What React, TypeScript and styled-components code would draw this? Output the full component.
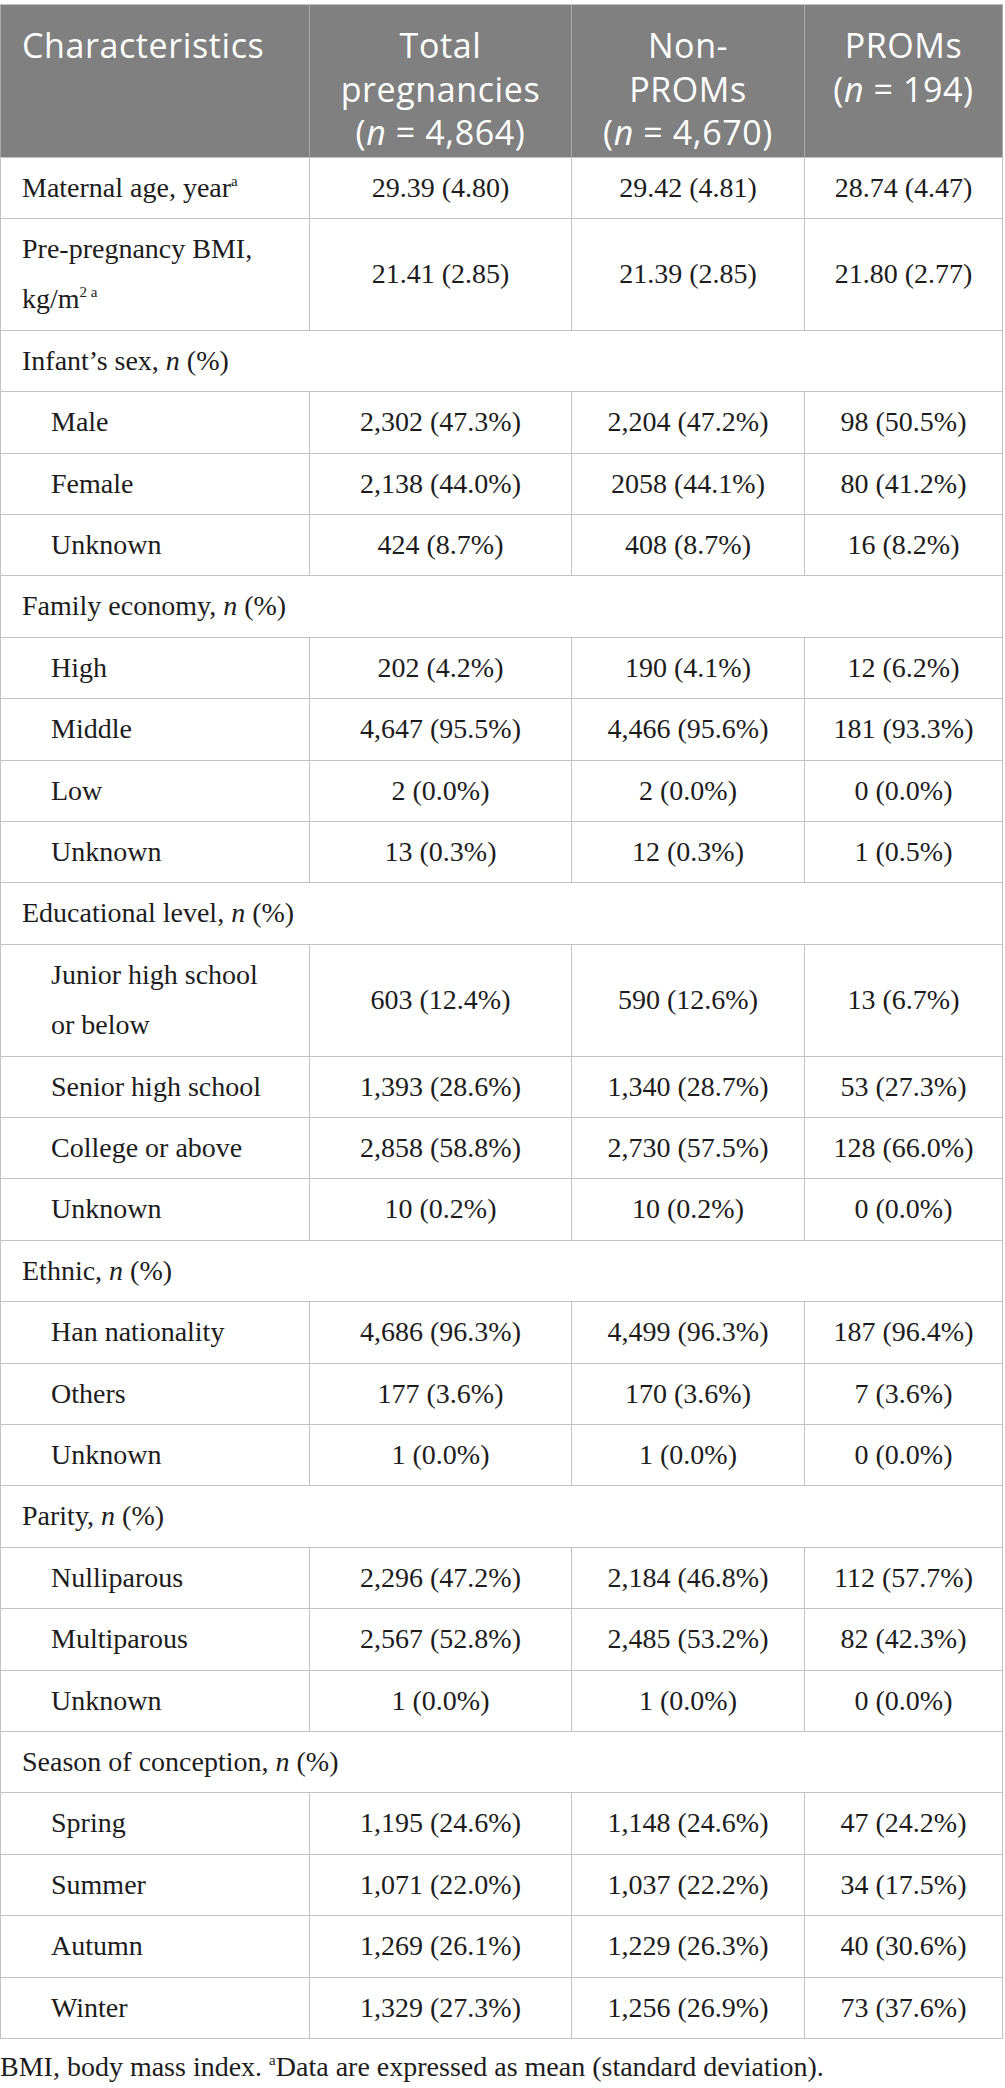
import React from "react";
import styled, { createGlobalStyle } from "styled-components";

const SERIF = `"Liberation Serif", Tinos, "Times New Roman", Times, serif`;

const GlobalStyle = createGlobalStyle`
  html, body {
    margin: 0;
    padding: 0;
    background: #ffffff;
  }
  body {
    font-family: ${SERIF};
    color: #1c1c1c;
  }
`;

const Page = styled.div`
  width: 1005px;
  padding-top: 4px;
`;

const Table = styled.table`
  width: 1002px;
  border-collapse: collapse;
  table-layout: fixed;
  border: 1px solid #c2c2c2;
  font-family: ${SERIF};
  font-size: 28px;
  color: #1c1c1c;
`;

const Col = styled.col<{ $w: number }>`
  width: ${(p) => p.$w}px;
`;

const HeadRow = styled.tr`
  background: #7f807f;
`;

const HeadCell = styled.th<{ $align?: "left" | "center" }>`
  font-family: "Open Sans", "Noto Sans", sans-serif;
  font-weight: 400;
  font-size: 34px;
  line-height: 43.5px;
  letter-spacing: 0.6px;
  color: #ffffff;
  text-align: ${(p) => p.$align ?? "center"};
  vertical-align: top;
  padding: 19px 10px 2px 21px;
  border: 1px solid #a9a9a9;
  border-top-color: #c2c2c2;
  border-bottom-color: #c2c2c2;
  &:not(:first-child) {
    padding-left: 6px;
    padding-right: 6px;
  }
`;

const Line = styled.span`
  display: block;
  white-space: nowrap;
`;

const Row = styled.tr``;

const Cell = styled.td<{ $indent?: boolean }>`
  font-family: ${SERIF};
  font-size: 28px;
  line-height: 50.4px;
  color: #1c1c1c;
  padding: 5px 6px 5px ${(p) => (p.$indent ? 50 : 21)}px;
  text-align: left;
  vertical-align: middle;
  border: 1px solid #c2c2c2;
`;

const ValueCell = styled(Cell)`
  text-align: center;
  padding-left: 4px;
  padding-right: 4px;
  white-space: nowrap;
`;

const Sup = styled.sup`
  font-size: 15px;
  line-height: 0;
  vertical-align: 11px;
`;

const Footnote = styled.p`
  margin: 3px 0 0 0;
  font-family: ${SERIF};
  font-size: 28px;
  line-height: 50.4px;
  color: #1c1c1c;
`;

type Item = { label: React.ReactNode; values: [string, string, string] };
type Group =
  | { kind: "single"; label: React.ReactNode; values: [string, string, string] }
  | { kind: "group"; label: React.ReactNode; items: Item[] };

const N = () => <i>n</i>;

const groups: Group[] = [
  {
    kind: "single",
    label: (
      <>
        Maternal age, year<Sup>a</Sup>
      </>
    ),
    values: ["29.39 (4.80)", "29.42 (4.81)", "28.74 (4.47)"],
  },
  {
    kind: "single",
    label: (
      <>
        Pre-pregnancy BMI,
        <br />
        kg/m<Sup>2 a</Sup>
      </>
    ),
    values: ["21.41 (2.85)", "21.39 (2.85)", "21.80 (2.77)"],
  },
  {
    kind: "group",
    label: (
      <>
        Infant’s sex, <N /> (%)
      </>
    ),
    items: [
      { label: "Male", values: ["2,302 (47.3%)", "2,204 (47.2%)", "98 (50.5%)"] },
      { label: "Female", values: ["2,138 (44.0%)", "2058 (44.1%)", "80 (41.2%)"] },
      { label: "Unknown", values: ["424 (8.7%)", "408 (8.7%)", "16 (8.2%)"] },
    ],
  },
  {
    kind: "group",
    label: (
      <>
        Family economy, <N /> (%)
      </>
    ),
    items: [
      { label: "High", values: ["202 (4.2%)", "190 (4.1%)", "12 (6.2%)"] },
      { label: "Middle", values: ["4,647 (95.5%)", "4,466 (95.6%)", "181 (93.3%)"] },
      { label: "Low", values: ["2 (0.0%)", "2 (0.0%)", "0 (0.0%)"] },
      { label: "Unknown", values: ["13 (0.3%)", "12 (0.3%)", "1 (0.5%)"] },
    ],
  },
  {
    kind: "group",
    label: (
      <>
        Educational level, <N /> (%)
      </>
    ),
    items: [
      {
        label: (
          <>
            Junior high school
            <br />
            or below
          </>
        ),
        values: ["603 (12.4%)", "590 (12.6%)", "13 (6.7%)"],
      },
      { label: "Senior high school", values: ["1,393 (28.6%)", "1,340 (28.7%)", "53 (27.3%)"] },
      { label: "College or above", values: ["2,858 (58.8%)", "2,730 (57.5%)", "128 (66.0%)"] },
      { label: "Unknown", values: ["10 (0.2%)", "10 (0.2%)", "0 (0.0%)"] },
    ],
  },
  {
    kind: "group",
    label: (
      <>
        Ethnic, <N /> (%)
      </>
    ),
    items: [
      { label: "Han nationality", values: ["4,686 (96.3%)", "4,499 (96.3%)", "187 (96.4%)"] },
      { label: "Others", values: ["177 (3.6%)", "170 (3.6%)", "7 (3.6%)"] },
      { label: "Unknown", values: ["1 (0.0%)", "1 (0.0%)", "0 (0.0%)"] },
    ],
  },
  {
    kind: "group",
    label: (
      <>
        Parity, <N /> (%)
      </>
    ),
    items: [
      { label: "Nulliparous", values: ["2,296 (47.2%)", "2,184 (46.8%)", "112 (57.7%)"] },
      { label: "Multiparous", values: ["2,567 (52.8%)", "2,485 (53.2%)", "82 (42.3%)"] },
      { label: "Unknown", values: ["1 (0.0%)", "1 (0.0%)", "0 (0.0%)"] },
    ],
  },
  {
    kind: "group",
    label: (
      <>
        Season of conception, <N /> (%)
      </>
    ),
    items: [
      { label: "Spring", values: ["1,195 (24.6%)", "1,148 (24.6%)", "47 (24.2%)"] },
      { label: "Summer", values: ["1,071 (22.0%)", "1,037 (22.2%)", "34 (17.5%)"] },
      { label: "Autumn", values: ["1,269 (26.1%)", "1,229 (26.3%)", "40 (30.6%)"] },
      { label: "Winter", values: ["1,329 (27.3%)", "1,256 (26.9%)", "73 (37.6%)"] },
    ],
  },
];

const ValueCells: React.FC<{ values: [string, string, string] }> = ({ values }) => (
  <>
    {values.map((v, i) => (
      <ValueCell key={i}>{v}</ValueCell>
    ))}
  </>
);

export default function App() {
  return (
    <Page>
      <GlobalStyle />
      <Table>
        <colgroup>
          <Col $w={309} />
          <Col $w={262} />
          <Col $w={233} />
          <Col $w={198} />
        </colgroup>
        <thead>
          <HeadRow>
            <HeadCell $align="left">
              <Line>Characteristics</Line>
            </HeadCell>
            <HeadCell>
              <Line>Total</Line>
              <Line>pregnancies</Line>
              <Line>
                (<i>n</i> = 4,864)
              </Line>
            </HeadCell>
            <HeadCell>
              <Line>Non-</Line>
              <Line>PROMs</Line>
              <Line>
                (<i>n</i> = 4,670)
              </Line>
            </HeadCell>
            <HeadCell>
              <Line>PROMs</Line>
              <Line>
                (<i>n</i> = 194)
              </Line>
            </HeadCell>
          </HeadRow>
        </thead>
        <tbody>
          {groups.map((g, gi) =>
            g.kind === "single" ? (
              <Row key={gi}>
                <Cell>{g.label}</Cell>
                <ValueCells values={g.values} />
              </Row>
            ) : (
              <React.Fragment key={gi}>
                <Row>
                  <Cell colSpan={4}>{g.label}</Cell>
                </Row>
                {g.items.map((it, ii) => (
                  <Row key={ii}>
                    <Cell $indent>{it.label}</Cell>
                    <ValueCells values={it.values} />
                  </Row>
                ))}
              </React.Fragment>
            )
          )}
        </tbody>
      </Table>
      <Footnote>
        BMI, body mass index. <Sup>a</Sup>Data are expressed as mean (standard deviation).
      </Footnote>
    </Page>
  );
}
